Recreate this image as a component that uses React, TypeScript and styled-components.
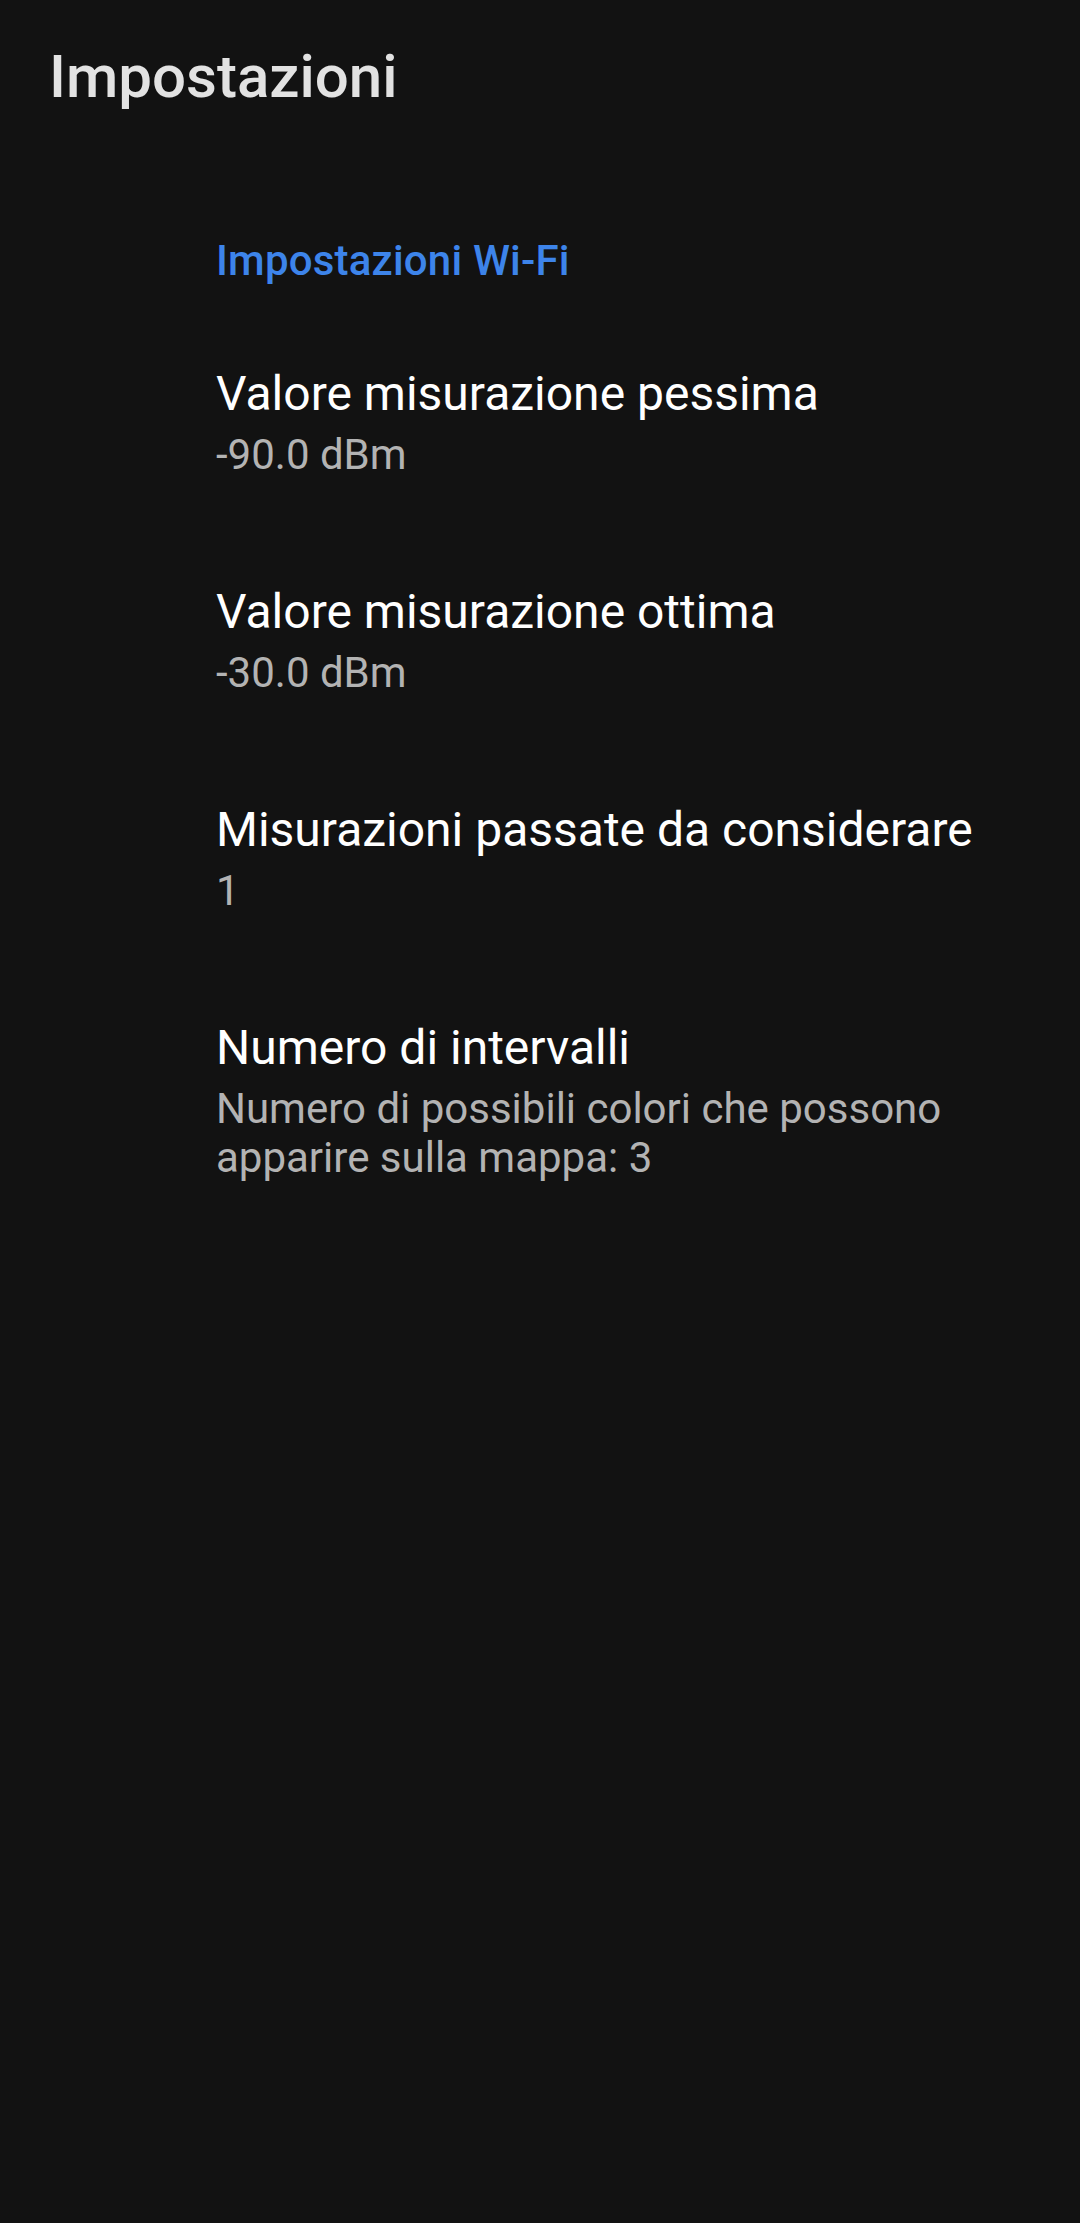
import React from "react";
import styled, { createGlobalStyle } from "styled-components";

const GlobalStyle = createGlobalStyle`
  html, body {
    margin: 0;
    padding: 0;
    background: #121212;
  }
  body {
    font-family: Roboto, "Noto Sans", "Liberation Sans", sans-serif;
    -webkit-font-smoothing: antialiased;
  }
  #root {
    min-height: 2223px;
    background: #121212;
  }
`;

const Screen = styled.div`
  width: 1080px;
  min-height: 2223px;
  background: #121212;
  display: flex;
  flex-direction: column;
`;

const Toolbar = styled.header`
  height: 154px;
  display: flex;
  align-items: center;
  padding: 0 49px;
`;

const ToolbarTitle = styled.h1`
  margin: 0;
  font-size: 60px;
  line-height: 70px;
  font-weight: 500;
  color: #e2e2e2;
`;

const PreferenceList = styled.main`
  display: flex;
  flex-direction: column;
`;

const CategoryHeader = styled.h2`
  margin: 0;
  padding: 82px 44px 28px 216px;
  font-size: 42px;
  line-height: 49px;
  font-weight: 500;
  letter-spacing: 0.2px;
  color: #3d84ea;
`;

const PreferenceItem = styled.div`
  display: flex;
  flex-direction: column;
  padding: 52px 44px 52px 216px;
`;

const PreferenceTitle = styled.div`
  font-size: 48px;
  line-height: 57px;
  font-weight: 400;
  color: #ffffff;
`;

const PreferenceSummary = styled.div`
  margin-top: 8px;
  font-size: 42px;
  line-height: 49px;
  font-weight: 400;
  color: #b3b3b3;
`;

const items = [
  { title: "Valore misurazione pessima", summary: "-90.0 dBm" },
  { title: "Valore misurazione ottima", summary: "-30.0 dBm" },
  { title: "Misurazioni passate da considerare", summary: "1" },
  {
    title: "Numero di intervalli",
    summary: "Numero di possibili colori che possono apparire sulla mappa: 3",
  },
];

export default function App() {
  return (
    <>
      <GlobalStyle />
      <Screen>
        <Toolbar>
          <ToolbarTitle>Impostazioni</ToolbarTitle>
        </Toolbar>
        <PreferenceList>
          <CategoryHeader>Impostazioni Wi-Fi</CategoryHeader>
          {items.map((it) => (
            <PreferenceItem key={it.title}>
              <PreferenceTitle>{it.title}</PreferenceTitle>
              <PreferenceSummary>{it.summary}</PreferenceSummary>
            </PreferenceItem>
          ))}
        </PreferenceList>
      </Screen>
    </>
  );
}
